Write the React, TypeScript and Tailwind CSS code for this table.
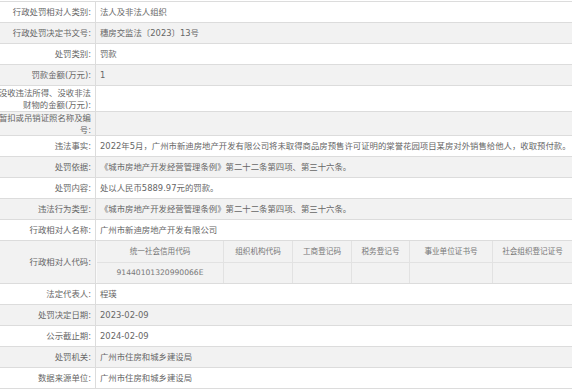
const rows: { label: string[]; value?: string; h: string; nested?: boolean }[] = [
  { label: ["行政处罚相对人类别:"], value: "法人及非法人组织", h: "h-[21px]" },
  { label: ["行政处罚决定书文号:"], value: "穗房交监法〔2023〕13号", h: "h-[21px]" },
  { label: ["处罚类别:"], value: "罚款", h: "h-[21px]" },
  { label: ["罚款金额(万元):"], value: "1", h: "h-[21px]" },
  { label: ["没收违法所得、没收非法", "财物的金额(万元):"], h: "h-[26px]" },
  { label: ["暂扣或吊销证照名称及编", "号:"], h: "h-[24px]" },
  {
    label: ["违法事实:"],
    value:
      "2022年5月，广州市新迪房地产开发有限公司将未取得商品房预售许可证明的棠誉花园项目某房对外销售给他人，收取预付款。",
    h: "h-[21px]",
  },
  { label: ["处罚依据:"], value: "《城市房地产开发经营管理条例》第二十二条第四项、第三十六条。", h: "h-[21px]" },
  { label: ["处罚内容:"], value: "处以人民币5889.97元的罚款。", h: "h-[21px]" },
  { label: ["违法行为类型:"], value: "《城市房地产开发经营管理条例》第二十二条第四项、第三十六条。", h: "h-[21px]" },
  { label: ["行政相对人名称:"], value: "广州市新迪房地产开发有限公司", h: "h-[21px]" },
  { label: ["行政相对人代码:"], h: "h-[43px]", nested: true },
  { label: ["法定代表人:"], value: "程瑛", h: "h-[21px]" },
  { label: ["处罚决定日期:"], value: "2023-02-09", h: "h-[21px]" },
  { label: ["公示截止期:"], value: "2024-02-09", h: "h-[21px]" },
  { label: ["处罚机关:"], value: "广州市住房和城乡建设局", h: "h-[21px]" },
  { label: ["数据来源单位:"], value: "广州市住房和城乡建设局", h: "h-[21px]" },
];

const codeCols = [
  { head: "统一社会信用代码", w: "w-[127px]", val: "91440101320990066E" },
  { head: "组织机构代码", w: "w-[69px]", val: "" },
  { head: "工商登记码", w: "w-[59px]", val: "" },
  { head: "税务登记号", w: "w-[58px]", val: "" },
  { head: "事业单位证书号", w: "w-[83px]", val: "" },
  { head: "社会组织登记证号", w: "w-[80px]", val: "" },
];

function CodeTable() {
  return (
    <div className="flex h-full">
      {codeCols.map((c, i) => (
        <div key={c.head} className={`${c.w} shrink-0 flex flex-col ${i > 0 ? "border-l border-[#e2e2e2]" : "border-l border-[#fafafa]"}`}>
          <div className="h-[22px] flex items-center justify-center border-b border-[#e2e2e2] text-[7.6px] text-[#777] whitespace-nowrap">
            {c.head}
          </div>
          <div className="flex-1 flex items-center justify-center text-[7.6px] text-[#777] whitespace-nowrap">
            {c.val}
          </div>
        </div>
      ))}
    </div>
  );
}

export default function App() {
  return (
    <div
      className="w-[572px] h-[392px] overflow-hidden bg-white text-[8.4px] text-[#666]"
      style={{ fontFamily: '"DejaVu Sans", "Noto Sans CJK SC", sans-serif' }}
    >
      <div className="mt-px border-t border-[#dcdcdc]">
        {rows.map((r, i) => (
          <div
            key={r.label.join("")}
            className={`flex border-b border-[#dcdcdc] ${r.h} ${i % 2 === 1 ? "bg-[#f2f2f2]" : "bg-white"}`}
          >
            <div className="w-[96px] shrink-0 border-r border-[#dcdcdc] flex flex-col justify-center items-end pr-[4px] leading-[12px]">
              {r.label.map((l) => (
                <span key={l} className="whitespace-nowrap">
                  {l}
                </span>
              ))}
            </div>
            {r.nested ? (
              <div className="flex-1 min-w-0">
                <CodeTable />
              </div>
            ) : (
              <div className="flex-1 min-w-0 flex items-center pl-[4px] whitespace-nowrap">{r.value}</div>
            )}
          </div>
        ))}
      </div>
    </div>
  );
}
